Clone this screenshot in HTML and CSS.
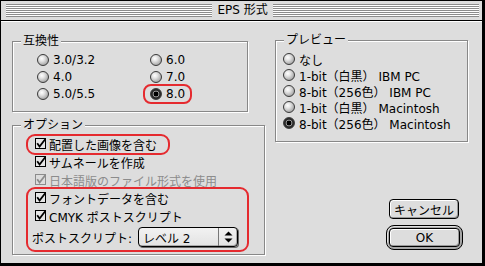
FILE: index.html
```html
<!DOCTYPE html>
<html lang="ja">
<head>
<meta charset="utf-8">
<title>EPS 形式</title>
<link rel="stylesheet" href="styles.css">
</head>
<body>
<div class="window">
  <div class="titlebar">
    <div class="stripes"></div>
    <div class="title">EPS 形式</div>
    <div class="stripes"></div>
  </div>
  <div class="content">
    <div class="col-left">
      <fieldset class="group compat">
        <legend>互換性</legend>
        <div class="radio-grid">
          <div class="opt"><span class="radio"></span><span>3.0/3.2</span></div>
          <div class="opt"><span class="radio"></span><span>4.0</span></div>
          <div class="opt"><span class="radio"></span><span>5.0/5.5</span></div>
          <div class="opt"><span class="radio"></span><span>6.0</span></div>
          <div class="opt"><span class="radio"></span><span>7.0</span></div>
          <div class="opt"><span class="radio on"></span><span>8.0</span></div>
        </div>
      </fieldset>
      <fieldset class="group options">
        <legend>オプション</legend>
        <div class="options-body">
          <div class="check-row"><svg class="check" viewBox="0 0 12 12" width="12" height="12"><rect x="0.5" y="0.5" width="10" height="10" fill="#e6e6e6" stroke="#000"/><path d="M2.2 5.2 L4.6 8.6 L10.2 1.2" fill="none" stroke="#000" stroke-width="1.8"/></svg><span>配置した画像を含む</span></div>
          <div class="check-row"><svg class="check" viewBox="0 0 12 12" width="12" height="12"><rect x="0.5" y="0.5" width="10" height="10" fill="#e6e6e6" stroke="#000"/><path d="M2.2 5.2 L4.6 8.6 L10.2 1.2" fill="none" stroke="#000" stroke-width="1.8"/></svg><span>サムネールを作成</span></div>
          <div class="check-row disabled"><svg class="check" viewBox="0 0 12 12" width="12" height="12"><rect x="0.5" y="0.5" width="10" height="10" fill="#dddddd" stroke="#8c8c8c"/><path d="M2.2 5.2 L4.6 8.6 L10.2 1.2" fill="none" stroke="#8c8c8c" stroke-width="1.8"/></svg><span>日本語版のファイル形式を使用</span></div>
          <div class="check-row"><svg class="check" viewBox="0 0 12 12" width="12" height="12"><rect x="0.5" y="0.5" width="10" height="10" fill="#e6e6e6" stroke="#000"/><path d="M2.2 5.2 L4.6 8.6 L10.2 1.2" fill="none" stroke="#000" stroke-width="1.8"/></svg><span>フォントデータを含む</span></div>
          <div class="check-row"><svg class="check" viewBox="0 0 12 12" width="12" height="12"><rect x="0.5" y="0.5" width="10" height="10" fill="#e6e6e6" stroke="#000"/><path d="M2.2 5.2 L4.6 8.6 L10.2 1.2" fill="none" stroke="#000" stroke-width="1.8"/></svg><span>CMYK ポストスクリプト</span></div>
          <div class="popup-row">
            <span class="popup-label">ポストスクリプト:</span>
            <div class="popup">
              <span class="popup-value">レベル 2</span>
              <span class="popup-arrows"><svg viewBox="0 0 9 12" width="9" height="12"><path d="M4.5 0.5 L8.5 4.5 L0.5 4.5 Z M0.5 7.5 L8.5 7.5 L4.5 11.5 Z" fill="#000"/></svg></span>
            </div>
          </div>
        </div>
      </fieldset>
    </div>
    <div class="col-right">
      <fieldset class="group preview">
        <legend>プレビュー</legend>
        <div class="preview-body">
          <div class="opt row16"><span class="radio"></span><span>なし</span></div>
          <div class="opt row16"><span class="radio"></span><span>1-bit（白黒） IBM PC</span></div>
          <div class="opt row16"><span class="radio"></span><span>8-bit（256色） IBM PC</span></div>
          <div class="opt row16"><span class="radio"></span><span>1-bit（白黒） Macintosh</span></div>
          <div class="opt row16"><span class="radio on"></span><span>8-bit（256色） Macintosh</span></div>
        </div>
      </fieldset>
      <div class="buttons">
        <div class="btn cancel">キャンセル</div>
        <div class="default-ring"><div class="btn ok">OK</div></div>
      </div>
    </div>
  </div>
  <div class="mark mark-images"></div>
  <div class="mark mark-font"></div>
  <div class="mark mark-version"></div>
</div>
</body>
</html>
```

FILE: styles.css
```css
* { box-sizing: border-box; }
html, body { margin: 0; padding: 0; }
body {
  width: 485px;
  height: 266px;
  overflow: hidden;
  background: #dddddd;
  font-family: "DejaVu Sans", "Noto Sans CJK JP", sans-serif;
  font-size: 12px;
  color: #000;
}
.window {
  position: relative;
  width: 485px;
  height: 266px;
  background: #dddddd;
  border-style: solid;
  border-color: #000;
  border-width: 1px 3px 3px 1px;
  display: flex;
  flex-direction: column;
}
.titlebar {
  flex: none;
  height: 20px;
  display: flex;
  align-items: center;
  padding: 0 3px 0 5px;
  border-bottom: 1px solid #000;
  background: #dddddd;
}
.stripes {
  flex: 1;
  height: 13px;
  background: repeating-linear-gradient(to bottom, #8c8c8c 0 1px, #ffffff 1px 2px);
}
.title {
  padding: 0 5px;
  line-height: 19px;
  white-space: nowrap;
}
.content {
  flex: 1;
  display: flex;
  padding-left: 11px;
  border-top: 1px solid #fff;
}
.col-left {
  width: 253px;
  flex: none;
  display: flex;
  flex-direction: column;
  align-items: flex-start;
}
.col-right {
  width: 193px;
  margin-left: 10px;
  flex: none;
  display: flex;
  flex-direction: column;
}
.group {
  margin: 0;
  padding: 0;
  min-width: 0;
  border: 1px solid #888888;
  box-shadow: 1px 1px 0 #ffffff, inset 1px 1px 0 #ffffff;
}
.group legend {
  margin-left: 8px;
  padding: 0 2px;
  height: 12px;
  line-height: 12px;
  background: #dddddd;
  white-space: nowrap;
}
.compat {
  width: 236px;
  margin-top: 13px;
}
.radio-grid {
  display: grid;
  grid-template-columns: 113px auto;
  grid-template-rows: repeat(3, 17px);
  grid-auto-flow: column;
  padding: 4px 0 9px 24px;
}
.opt {
  display: flex;
  align-items: center;
  gap: 4px;
  white-space: nowrap;
}
.radio {
  flex: none;
  width: 12px;
  height: 12px;
  border-radius: 50%;
  border: 1px solid #3a3a3a;
  background: radial-gradient(circle at 38% 35%, #ffffff 0, #e4e4e4 30%, #a8a8a8 75%, #7a7a7a 100%);
}
.radio.on {
  background: radial-gradient(circle at 50% 50%, #000 0 2.4px, #9a9a9a 2.6px 3.3px, #2a2a2a 3.6px);
}
.options {
  width: 253px;
  margin-top: 7px;
}
.options-body {
  padding: 4px 0 7px 22px;
}
.check-row {
  height: 18px;
  display: flex;
  align-items: center;
  gap: 2px;
  white-space: nowrap;
}
.check { flex: none; }
.check-row.disabled { color: #8c8c8c; }
.popup-row {
  margin: 2px 0 0 -3px;
  height: 20px;
  display: flex;
  align-items: center;
  gap: 6px;
}
.popup {
  width: 100px;
  height: 20px;
  display: flex;
  align-items: center;
  border: 1px solid #000;
  border-radius: 4px;
  background: linear-gradient(#f2f2f2, #e2e2e2);
  box-shadow: 1px 1px 0 #666666, inset -1px -1px 0 #aaaaaa;
}
.popup-value {
  flex: 1;
  padding-left: 4px;
  white-space: nowrap;
}
.popup-arrows {
  width: 19px;
  height: 18px;
  display: flex;
  align-items: center;
  justify-content: center;
  border-left: 1px solid #777;
}
.preview {
  width: 193px;
  margin-top: 12px;
}
.preview-body {
  padding: 5px 0 10px 7px;
}
.row16 { height: 16px; }
.buttons {
  display: flex;
  flex-direction: column;
  align-items: flex-end;
  padding-right: 5px;
  margin-top: 57px;
}
.btn {
  display: flex;
  align-items: center;
  justify-content: center;
  border: 1px solid #000;
  border-radius: 4px;
  background: #dddddd;
  box-shadow: inset 1px 1px 0 #ffffff, inset -1px -1px 0 #999999;
  white-space: nowrap;
}
.cancel {
  width: 70px;
  height: 20px;
  margin-right: 4px;
}
.default-ring {
  width: 77px;
  height: 25px;
  margin-top: 6px;
  padding: 2px;
  border: 1px solid #000;
  border-radius: 8px;
  background: #a6a6a6;
  box-shadow: inset 1px 1px 0 #e0e0e0;
}
.ok {
  width: 100%;
  height: 100%;
}
.mark {
  position: absolute;
  border: 2px solid #e52a2f;
  border-radius: 9px;
}
.mark-images { left: 25px; top: 133px; width: 144px; height: 21px; }
.mark-font { left: 25px; top: 186px; width: 223px; height: 65px; }
.mark-version { left: 142px; top: 83px; width: 49px; height: 20px; border-radius: 8px; }
```
